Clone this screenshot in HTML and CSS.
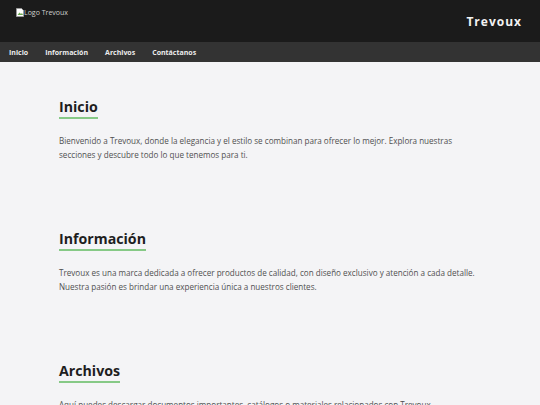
FILE: index.html
```html
<!DOCTYPE html>
<html lang="es">
<head>
<meta charset="utf-8">
<title>Trevoux</title>
<link rel="stylesheet" href="styles.css">
</head>
<body>
<header class="topbar">
  <div class="logo">
    <svg class="broken" width="8" height="9" viewBox="0 0 8 9"><path d="M0.5 0.5h5l2 2v6h-7z" fill="#fff" stroke="#9a9a9a"/><path d="M1.5 7l2-2.5 1.5 1.5 1-1 1 2z" fill="#6aa84f"/></svg><span>Logo Trevoux</span>
  </div>
  <div class="brand">Trevoux</div>
</header>
<nav class="menu">
  <a href="#inicio">Inicio</a>
  <a href="#informacion">Información</a>
  <a href="#archivos">Archivos</a>
  <a href="#contacto">Contáctanos</a>
</nav>
<main class="content">
  <section class="block" id="inicio">
    <h2 class="title">Inicio</h2>
    <p class="text">Bienvenido a Trevoux, donde la elegancia y el estilo se combinan para ofrecer lo mejor. Explora nuestras secciones y descubre todo lo que tenemos para ti.</p>
  </section>
  <section class="block" id="informacion">
    <h2 class="title">Información</h2>
    <p class="text">Trevoux es una marca dedicada a ofrecer productos de calidad, con diseño exclusivo y atención a cada detalle. Nuestra pasión es brindar una experiencia única a nuestros clientes.</p>
  </section>
  <section class="block" id="archivos">
    <h2 class="title">Archivos</h2>
    <p class="text">Aquí puedes descargar documentos importantes, catálogos o materiales relacionados con Trevoux.</p>
  </section>
</main>
</body>
</html>
```
FILE: styles.css
```css
html, body {
  margin: 0;
  padding: 0;
}
body {
  background: #f4f4f6;
  font-family: "Open Sans", "Liberation Sans", sans-serif;
  color: #3a3a3a;
}
.topbar {
  height: 42px;
  background: #1b1b1b;
  display: flex;
  justify-content: space-between;
  align-items: flex-start;
  padding: 0 18px 0 16px;
  box-sizing: border-box;
}
.logo {
  display: flex;
  align-items: center;
  margin-top: 8px;
  font-size: 7px;
  color: #d0d0d0;
}
.broken {
  display: block;
}
.brand {
  margin-top: 13px;
  font-size: 12px;
  font-weight: 700;
  letter-spacing: 1px;
  color: #f2f2f2;
}
.menu {
  height: 20px;
  background: #333333;
  display: flex;
  align-items: center;
  gap: 17px;
  padding: 0 9px;
}
.menu a {
  color: #ececec;
  text-decoration: none;
  font-size: 7px;
  font-weight: 700;
}
.content {
  padding: 0 59px;
}
.block {
  padding: 33px 0 32px;
}
.title {
  display: inline-block;
  margin: 0;
  font-size: 14.2px;
  line-height: 18px;
  font-weight: 700;
  color: #1e1e1e;
  padding-bottom: 1px;
  border-bottom: 2px solid #86c986;
}
.text {
  margin: 15px 0 0;
  font-size: 8.1px;
  line-height: 14px;
  color: #505050;
}
```
